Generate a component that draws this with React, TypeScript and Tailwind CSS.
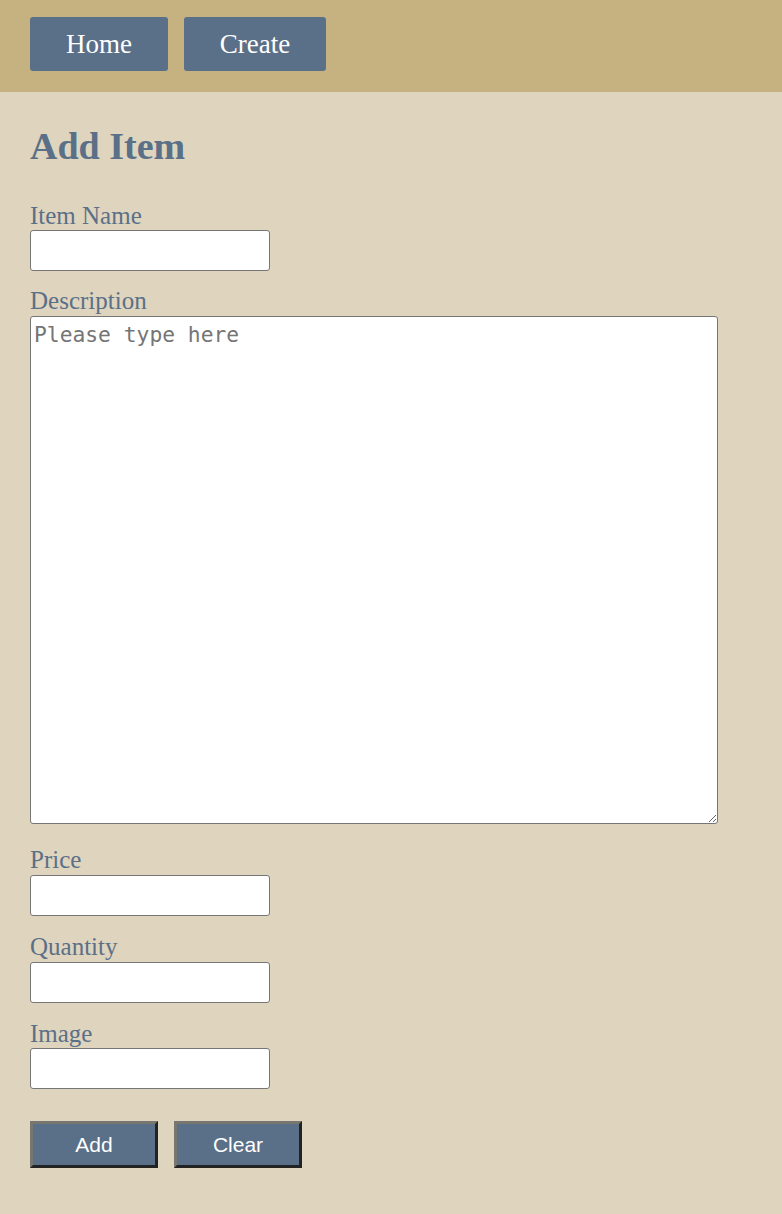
export default function App() {
  const labelClass =
    "block text-[25px] leading-[28.75px] text-[#5a7088] font-['Liberation_Serif',serif]";
  const inputClass =
    "block w-[240px] h-[41px] bg-white border border-[#767676] rounded-[3px] px-[3px] text-[16px] focus:outline-none";
  const actionClass =
    "w-[128px] h-[47px] bg-[#5a7088] text-white text-[21px] font-['Liberation_Sans',sans-serif] border-[3px] border-t-[#77776f] border-l-[#77776f] border-b-[#222222] border-r-[#222222]";

  return (
    <div className="min-h-screen bg-[#dfd4bd] font-['Liberation_Serif',serif]">
      <nav className="bg-[#c6b280] pt-[17px] pb-[21px] px-[30px] flex gap-4">
        <button className="w-[138px] h-[54px] bg-[#5a7088] text-white text-[27px] rounded-[3px]">
          Home
        </button>
        <button className="w-[142px] h-[54px] bg-[#5a7088] text-white text-[27px] rounded-[3px]">
          Create
        </button>
      </nav>

      <main className="px-[30px] pt-[33px] pb-[46px]">
        <h1 className="text-[38px] leading-[43.7px] font-bold text-[#5a7088] mb-[33px]">
          Add Item
        </h1>

        <form onSubmit={(e) => e.preventDefault()}>
          <label className={labelClass}>Item Name</label>
          <input name="name" type="text" className={inputClass} />

          <label className={labelClass + " mt-4"}>Description</label>
          <textarea
            name="description"
            placeholder="Please type here"
            className="block w-[688px] h-[508px] bg-white border border-[#767676] rounded-[3px] px-[3px] py-[2px] text-[21.3px] placeholder:text-[#757575] font-['DejaVu_Sans_Mono',monospace] focus:outline-none"
          />

          <label className={labelClass + " mt-[22px]"}>Price</label>
          <input name="price" type="text" className={inputClass} />

          <label className={labelClass + " mt-[17px]"}>Quantity</label>
          <input name="quantity" type="text" className={inputClass} />

          <label className={labelClass + " mt-[17px]"}>Image</label>
          <input name="image" type="text" className={inputClass} />

          <div className="flex gap-4 mt-8">
            <button type="submit" className={actionClass}>
              Add
            </button>
            <button type="reset" className={actionClass}>
              Clear
            </button>
          </div>
        </form>
      </main>
    </div>
  );
}
